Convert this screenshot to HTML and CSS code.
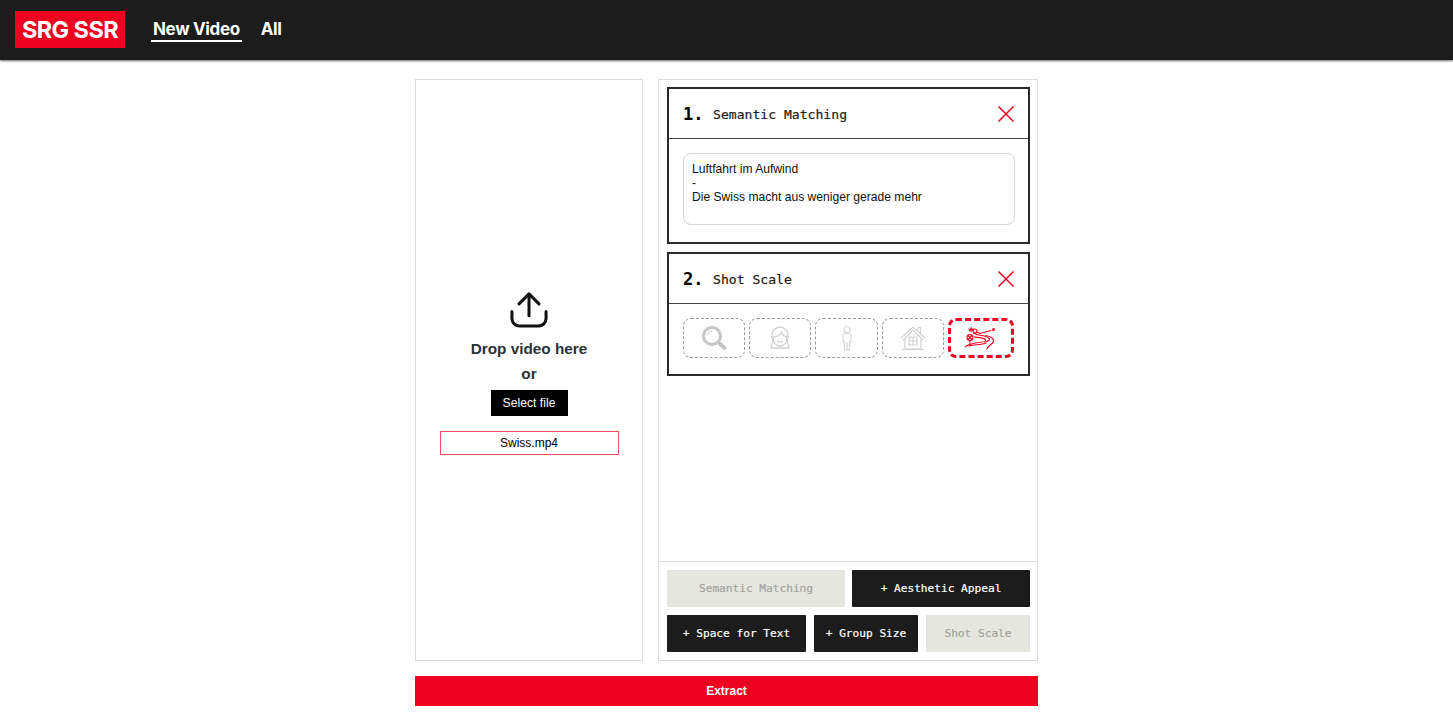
FILE: index.html
```html
<!DOCTYPE html>
<html lang="en">
<head>
<meta charset="utf-8">
<title>New Video</title>
<link rel="stylesheet" href="styles.css">
</head>
<body>
<header class="topbar">
  <div class="logo">SRG SSR</div>
  <nav class="nav">
    <a class="nav-link active">New Video</a>
    <a class="nav-link">All</a>
  </nav>
</header>
<main class="page">
  <div class="panels">
    <section class="drop-panel">
      <svg class="upload-icon" viewBox="0 0 40 38" width="38" height="36" fill="none" stroke="#111" stroke-width="3.200" stroke-linecap="round" stroke-linejoin="round">
        <path d="M20 25V3"/>
        <path d="M9.500 12.500 20 2l10.500 10.500"/>
        <path d="M2 20.500V28a8 8 0 0 0 8 8h20a8 8 0 0 0 8-8v-7.500"/>
      </svg>
      <div class="drop-title">Drop video here</div>
      <div class="drop-or">or</div>
      <button class="select-btn">Select file</button>
      <div class="file-name">Swiss.mp4</div>
    </section>
    <section class="config-panel">
      <div class="card-list">
        <article class="card">
          <div class="card-head">
            <span class="card-num">1.</span>
            <span class="card-title">Semantic Matching</span>
            <svg class="close-icon" viewBox="0 0 16 16" width="16" height="16" stroke="#ed0020" stroke-width="1.500" fill="none"><path d="M.5.5l15 15M15.500.5l-15 15"/></svg>
          </div>
          <div class="card-body">
            <div class="text-box">Luftfahrt im Aufwind<br>-<br>Die Swiss macht aus weniger gerade mehr</div>
          </div>
        </article>
        <article class="card">
          <div class="card-head">
            <span class="card-num">2.</span>
            <span class="card-title">Shot Scale</span>
            <svg class="close-icon" viewBox="0 0 16 16" width="16" height="16" stroke="#ed0020" stroke-width="1.500" fill="none"><path d="M.5.5l15 15M15.500.5l-15 15"/></svg>
          </div>
          <div class="card-body scale-row">
            <div class="scale-opt">
              <svg viewBox="0 0 26 26" width="26" height="26" fill="none" stroke="#c6c6c6"><circle cx="11" cy="11" r="8.500" stroke-width="3"/><path d="M6.500 10a5 5 0 0 1 5-4" stroke-width="1"/><path d="M17.500 17.500l6 5.500" stroke-width="4" stroke-linecap="round"/></svg>
            </div>
            <div class="scale-opt">
              <svg viewBox="0 0 26 26" width="26" height="26" fill="none" stroke="#d2d2d2" stroke-width="1.300"><path d="M4 23c0-3 1-4 2-6-2-5-2-14 7-15 9 1 9 10 7 15 1 2 2 3 2 6z"/><path d="M5.500 12c4 0 7-1.500 9-5 1 3 3 4.500 6 5"/><path d="M6 12c0 6 3 9 7 9s7-3 7-9"/><path d="M10 16c2 1.500 4 1.500 6 0"/></svg>
            </div>
            <div class="scale-opt">
              <svg viewBox="0 0 26 26" width="26" height="26" fill="none" stroke="#d6d6d6" stroke-width="1.200"><circle cx="13" cy="4.500" r="3"/><path d="M9 17v-6a2.500 2.500 0 0 1 2.500-2.500h3A2.500 2.500 0 0 1 17 11v6h-1.500v8h-5v-8z"/><path d="M13 17v8"/></svg>
            </div>
            <div class="scale-opt">
              <svg viewBox="0 0 26 26" width="26" height="26" fill="none" stroke="#d2d2d2" stroke-width="1.200"><path d="M1 13 13 2l12 11"/><path d="M3 15 13 5l10 10"/><path d="M18 5V2.500h2.500V8"/><path d="M5 14v10h16V14"/><path d="M9 12h8v8H9zM13 12v8M9 16h8"/><path d="M2 24.500h22"/></svg>
            </div>
            <div class="scale-opt selected">
              <svg viewBox="0 0 32 24" width="32" height="24" fill="none" stroke="#ed0020" stroke-width="1.100" stroke-linecap="round"><circle cx="5" cy="11.500" r="3"/><path d="M3 9.500l4 4M7 9.500l-4 4M5 14.500V20"/><circle cx="10" cy="5" r="2"/><path d="M4 3l1 2 1-3 1 3 1-2.500M12 6l3 1.500 11-3"/><circle cx="28.500" cy="3.500" r="1"/><path d="M9 7c3 3 7 1.500 12 3.500 6 2.500 3 5-1 5.500"/><path d="M9 11c5 .5 12 1 11.500 3.500S12 16 8 17.500 1 19.500 0 21"/><path d="M21 9.500c7 1.500 9 4.500 6.500 7.500-2 2-5 3.500-5.500 6"/><path d="M4 20c5-1.500 13-1 17-3"/></svg>
            </div>
          </div>
        </article>
      </div>
      <div class="add-bar">
        <div class="add-row">
          <button class="add-btn off wide">Semantic Matching</button>
          <button class="add-btn wide">+ Aesthetic Appeal</button>
        </div>
        <div class="add-row">
          <button class="add-btn text">+ Space for Text</button>
          <button class="add-btn group">+ Group Size</button>
          <button class="add-btn off group">Shot Scale</button>
        </div>
      </div>
    </section>
  </div>
  <button class="extract">Extract</button>
</main>
</body>
</html>
```
FILE: styles.css
```css
* { box-sizing: border-box; }
html, body { margin: 0; padding: 0; }
body {
  background: #fff;
  font-family: "Liberation Sans", Arial, sans-serif;
  color: #000;
  height: 725px;
  overflow: hidden;
}
button { font: inherit; border: 0; padding: 0; }

.topbar {
  height: 60px;
  background: #1c1c1c;
  box-shadow: 0 1px 2px rgba(0, 0, 0, .6);
  display: flex;
  align-items: center;
  padding-left: 15px;
}
.logo {
  width: 110px;
  height: 37px;
  margin-top: -1px;
  background: #ed0020;
  color: #fff;
  font-family: Inter, sans-serif;
  font-weight: 700;
  font-size: 23.500px;
  letter-spacing: -.6px;
  line-height: 37px;
  text-align: center;
}
.nav {
  display: flex;
  gap: 19px;
  margin-left: 26px;
}
.nav-link {
  color: #fff;
  font-family: Inter, sans-serif;
  font-weight: 700;
  font-size: 17px;
  letter-spacing: -.35px;
  line-height: 22px;
  height: 24px;
}
.nav-link.active {
  border-bottom: 2px solid #fff;
  padding: 0 2px;
}

.page { width: 623px; margin: 19px auto 0; }
.panels { display: flex; gap: 15px; height: 582px; }

.drop-panel {
  width: 229px;
  border: 1px solid #dcdcdc;
  display: flex;
  flex-direction: column;
  align-items: center;
  padding-top: 212px;
}
.upload-icon { display: block; }
.drop-title {
  margin-top: 12px;
  font-weight: 700;
  font-size: 15.300px;
  line-height: 17px;
  color: #2b3238;
}
.drop-or {
  margin-top: 8px;
  font-weight: 700;
  font-size: 15.300px;
  line-height: 17px;
  color: #2b3238;
}
.select-btn {
  margin-top: 8px;
  width: 77px;
  height: 26px;
  background: #000;
  color: #fff;
  font-size: 12.200px;
}
.file-name {
  margin-top: 15px;
  width: 179px;
  height: 24px;
  border: 1px solid #f0505f;
  font-size: 12px;
  line-height: 22px;
  text-align: center;
}

.config-panel {
  flex: 1;
  border: 1px solid #dcdcdc;
  display: flex;
  flex-direction: column;
}
.card-list {
  flex: 1;
  padding: 7px 7px 0 8px;
  display: flex;
  flex-direction: column;
  gap: 8px;
}
.card { border: 2px solid #2a2a2a; }
.card-head {
  height: 50px;
  border-bottom: 1px solid #444;
  display: flex;
  align-items: center;
  padding: 0 14px 0 14px;
}
.card-num {
  font-family: "DejaVu Sans Mono", monospace;
  font-weight: 700;
  font-size: 17px;
  width: 30px;
}
.card-title {
  font-family: "DejaVu Sans Mono", monospace;
  font-size: 13.100px;
  color: #1c1c1c;
  flex: 1;
  padding-top: 2px;
  -webkit-text-stroke: .2px;
}
.card-body { padding: 14px 13px 17px 14px; }
.text-box {
  height: 72px;
  border: 1px solid #d6d6d6;
  border-radius: 8px;
  padding: 8px 8px;
  font-size: 12.100px;
  line-height: 14px;
  color: #111;
}
.scale-row {
  display: flex;
  gap: 4px;
  padding: 14px 14px 16px 14px;
}
.scale-opt {
  flex: 1;
  height: 40px;
  border: 1px dashed #9a9a9a;
  border-radius: 8px;
  display: flex;
  align-items: center;
  justify-content: center;
}
.scale-opt.selected {
  border: 3px dashed #ed0020;
}

.add-bar {
  border-top: 1px solid #dcdcdc;
  padding: 8px 7px 8px 8px;
  display: flex;
  flex-direction: column;
  gap: 8px;
}
.add-row { display: flex; gap: 8px; }
.add-row:first-child { gap: 7px; }
.add-btn {
  height: 37px;
  background: #1c1c1c;
  color: #fff;
  font-family: "DejaVu Sans Mono", monospace;
  font-size: 11.150px;
  border-radius: 1px;
  -webkit-text-stroke: .2px;
}
.add-btn.off { background: #e6e6e1; color: #a3a3a0; }
.add-btn.wide { width: 178px; }
.add-btn.text { width: 139px; }
.add-btn.group { width: 104px; }

.extract {
  display: block;
  width: 100%;
  height: 30px;
  margin-top: 15px;
  background: #ed0020;
  color: #fff;
  font-weight: 700;
  font-size: 12px;
}
```
